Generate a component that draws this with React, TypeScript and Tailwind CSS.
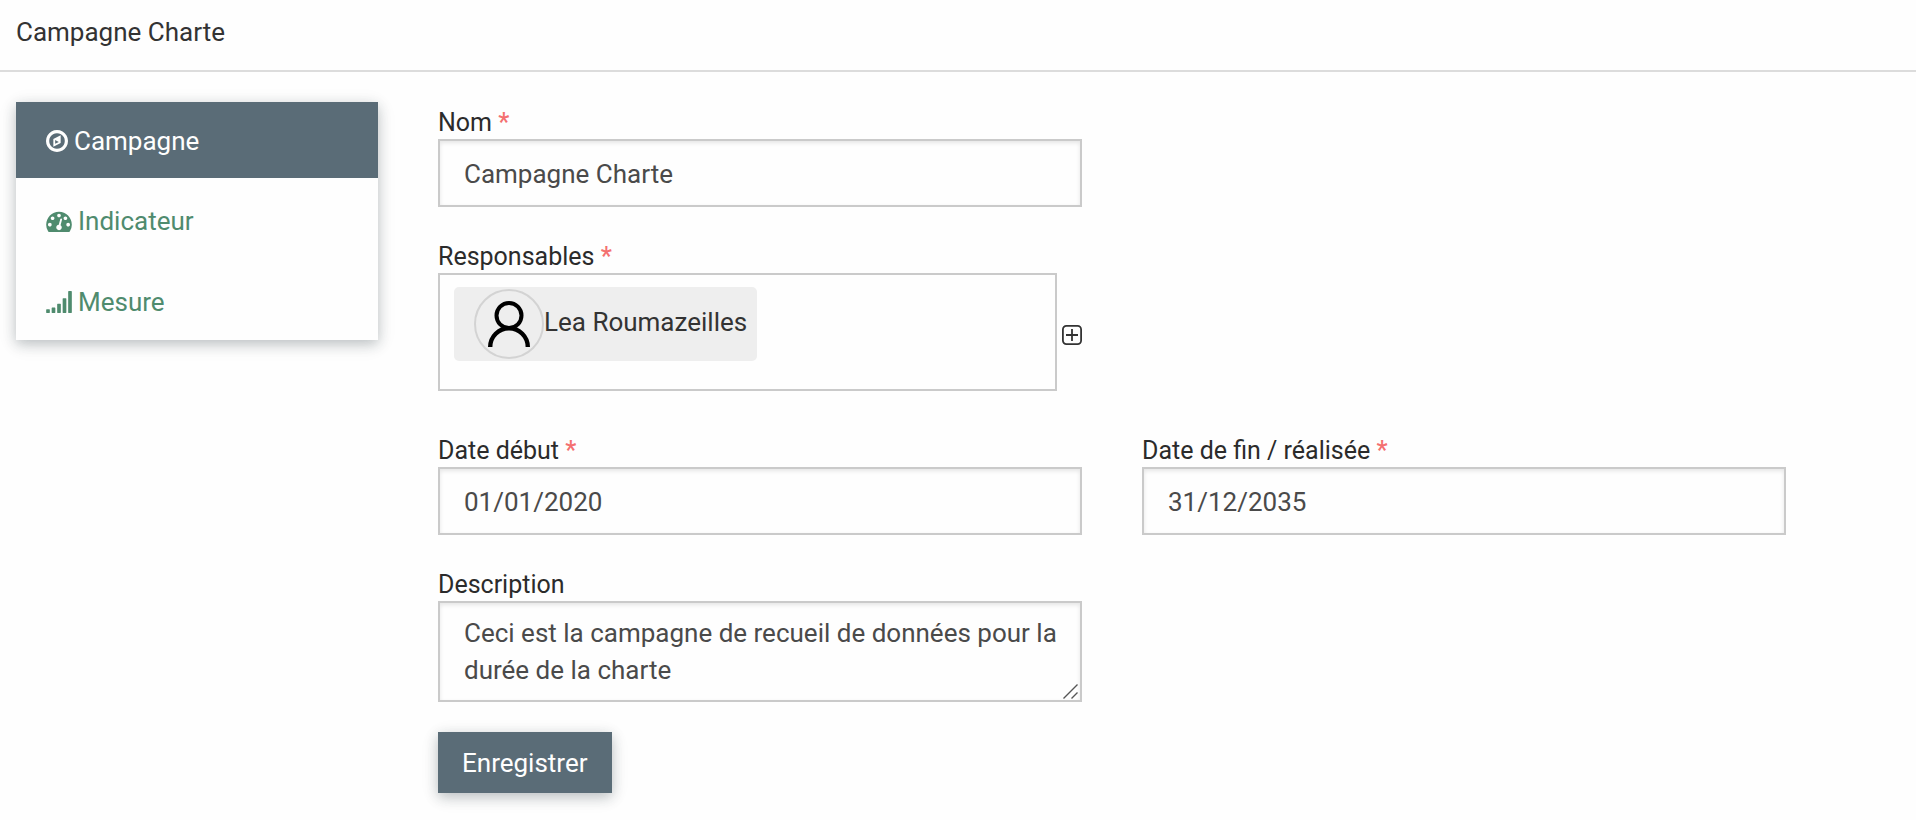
import React, { useState } from "react";

function CompassIcon() {
  return (
    <svg className="h-[22px] w-[22px] shrink-0" viewBox="0 0 1536 1536" fill="currentColor" aria-hidden="true">
      <g transform="translate(0 1408) scale(1 -1)">
        <path d="M640 448l256 128l-256 128v-256zM1024 1039v-542l-512 -256v542zM1312 640q0 148 -73 273t-198 198t-273 73t-273 -73t-198 -198t-73 -273t73 -273t198 -198t273 -73t273 73t198 198t73 273zM1536 640q0 -209 -103 -385.5t-279.5 -279.5t-385.5 -103t-385.5 103t-279.5 279.5t-103 385.5t103 385.5t279.5 279.5t385.5 103t385.5 -103t279.5 -279.5t103 -385.5z" />
      </g>
    </svg>
  );
}

function GaugeIcon() {
  return (
    <svg className="h-[22px] w-[26px] shrink-0" viewBox="0 0 1792 1536" fill="currentColor" aria-hidden="true">
      <g transform="translate(0 1408) scale(1 -1)">
        <path d="M384 384q0 53 -37.5 90.5t-90.5 37.5t-90.5 -37.5t-37.5 -90.5t37.5 -90.5t90.5 -37.5t90.5 37.5t37.5 90.5zM576 832q0 53 -37.5 90.5t-90.5 37.5t-90.5 -37.5t-37.5 -90.5t37.5 -90.5t90.5 -37.5t90.5 37.5t37.5 90.5zM1004 351l101 382q6 26 -7.5 48.5t-38.5 29.5t-48 -6.5t-30 -39.5l-101 -382q-60 -5 -107 -43.5t-63 -98.5q-20 -77 20 -146t117 -89t146 20t89 117q16 60 -6 117t-72 91zM1664 384q0 53 -37.5 90.5t-90.5 37.5t-90.5 -37.5t-37.5 -90.5t37.5 -90.5t90.5 -37.5t90.5 37.5t37.5 90.5zM1024 1024q0 53 -37.5 90.5t-90.5 37.5t-90.5 -37.5t-37.5 -90.5t37.5 -90.5t90.5 -37.5t90.5 37.5t37.5 90.5zM1472 832q0 53 -37.5 90.5t-90.5 37.5t-90.5 -37.5t-37.5 -90.5t37.5 -90.5t90.5 -37.5t90.5 37.5t37.5 90.5zM1792 384q0 -261 -141 -483q-19 -29 -54 -29h-1402q-35 0 -54 29q-141 221 -141 483q0 182 71 348t191 286t286 191t348 71t348 -71t286 -191t191 -286t71 -348z" />
      </g>
    </svg>
  );
}

function SignalIcon() {
  return (
    <svg className="h-[22px] w-[26px] shrink-0" viewBox="0 0 1792 1536" fill="currentColor" aria-hidden="true">
      <rect x="0" y="1280" width="256" height="256" rx="32" />
      <rect x="384" y="1152" width="256" height="384" rx="32" />
      <rect x="768" y="896" width="256" height="640" rx="32" />
      <rect x="1152" y="512" width="256" height="1024" rx="32" />
      <rect x="1536" y="0" width="256" height="1536" rx="32" />
    </svg>
  );
}

function Avatar() {
  return (
    <svg className="size-[70px] shrink-0" viewBox="0 0 70 70" fill="none" aria-hidden="true">
      <circle cx="35" cy="35" r="34" stroke="#d3d3d3" strokeWidth="2" />
      <circle cx="35" cy="26.5" r="12.5" stroke="#000" strokeWidth="4" />
      <path d="M16.2 58a18.8 18.8 0 0 1 37.6 0" stroke="#000" strokeWidth="4.4" />
    </svg>
  );
}

const tabs = [
  { label: "Campagne", icon: <CompassIcon /> },
  { label: "Indicateur", icon: <GaugeIcon /> },
  { label: "Mesure", icon: <SignalIcon /> },
];

const controlClass =
  "block w-full border-2 border-[#cacaca] bg-[#fefefe] text-[26px] text-[#4a4a4a] shadow-[inset_0_2px_4px_rgba(10,10,10,0.1)] outline-none";
const labelClass = "block pt-1 text-[25px] leading-8 text-[#2b2b2b]";

function Required() {
  return <span className="font-medium text-[#f47070]">*</span>;
}

function Field({ id, label, value, required }: { id: string; label: string; value: string; required?: boolean }) {
  return (
    <div>
      <label htmlFor={id} className={labelClass}>
        {label} {required && <Required />}
      </label>
      <input id={id} type="text" defaultValue={value} required={required} className={`${controlClass} h-[68px] px-6 pt-[2px]`} />
    </div>
  );
}

export default function App() {
  const [active, setActive] = useState("Campagne");
  return (
    <div className="min-h-screen bg-[#fefefe] pb-[26px] font-[Roboto,sans-serif] text-[26px] text-[#333]">
      <header className="border-b-2 border-[#dcdcdc] px-4 pt-3 pb-[18px]">
        <h1 className="leading-10">Campagne Charte</h1>
      </header>
      <div className="flex items-start gap-[60px] pt-[30px] pr-[130px] pl-4">
        <nav className="flex w-[362px] shrink-0 flex-col bg-[#fefefe] shadow-[0_4px_20px_rgba(0,0,0,0.08),0_4px_12px_rgba(30,50,60,0.24)]">
          {tabs.map((tab) => (
            <a
              key={tab.label}
              href={`#${tab.label.toLowerCase()}`}
              onClick={() => setActive(tab.label)}
              className={`flex items-center gap-[6px] px-[30px] leading-9 ${
                active === tab.label ? "h-[76px] bg-[#5a6c77] pt-[2px] text-[#fefefe]" : "h-[81px] pt-1 text-[#4f8b6e]"
              }`}
            >
              {tab.icon}
              {tab.label}
            </a>
          ))}
        </nav>
        <form className="min-w-0 flex-1 pt-px" onSubmit={(e) => e.preventDefault()}>
          <div className="grid grid-cols-2 gap-x-[60px] gap-y-[30px]">
            <div className="col-start-1">
              <Field id="nom" label="Nom" value="Campagne Charte" required />
            </div>
            <div className="col-start-1" role="group" aria-labelledby="responsables">
              <div id="responsables" className={labelClass}>
                Responsables <Required />
              </div>
              <div className="flex items-center gap-[5px]">
                <div className="h-[118px] flex-1 border-2 border-[#cacaca] px-[14px] py-3">
                  <div className="flex h-[74px] w-fit items-center rounded-[5px] bg-[#eee] pr-[10px] pl-5">
                    <Avatar />
                    <span className="pb-1">Lea Roumazeilles</span>
                  </div>
                </div>
                <button type="button" aria-label="Ajouter un responsable" className="pt-[6px]">
                  <svg className="block size-5" viewBox="0 0 20 20" fill="none" stroke="#333" strokeWidth="1.8" aria-hidden="true">
                    <rect x="0.9" y="0.9" width="18.2" height="18.2" rx="3.5" />
                    <path d="M10 4v12M4 10h12" />
                  </svg>
                </button>
              </div>
            </div>
            <div className="col-start-1 pt-[10px]">
              <Field id="debut" label="Date début" value="01/01/2020" required />
            </div>
            <div className="pt-[10px]">
              <Field id="fin" label="Date de fin / réalisée" value="31/12/2035" required />
            </div>
            <div className="col-start-1">
              <label htmlFor="description" className={labelClass}>
                Description
              </label>
              <div className="relative">
                <textarea
                  id="description"
                  rows={2}
                  defaultValue="Ceci est la campagne de recueil de données pour la durée de la charte"
                  className={`${controlClass} h-[101px] resize-none overflow-hidden py-3 pr-4 pl-6 leading-[37px]`}
                />
                <svg
                  className="pointer-events-none absolute right-1 bottom-[3px] size-[15px]"
                  viewBox="0 0 15 15"
                  fill="none"
                  stroke="#555"
                  strokeWidth="1.4"
                  aria-hidden="true"
                >
                  <path d="M0.5 14.5l14-14M8.5 14.5l6-6" />
                </svg>
              </div>
            </div>
          </div>
          <button
            type="submit"
            className="mt-[30px] h-[61px] bg-[#5a6c77] px-6 pt-[2px] text-[#fefefe] shadow-[0_4px_20px_rgba(0,0,0,0.08),0_4px_12px_rgba(30,50,60,0.24)]"
          >
            Enregistrer
          </button>
        </form>
      </div>
    </div>
  );
}
